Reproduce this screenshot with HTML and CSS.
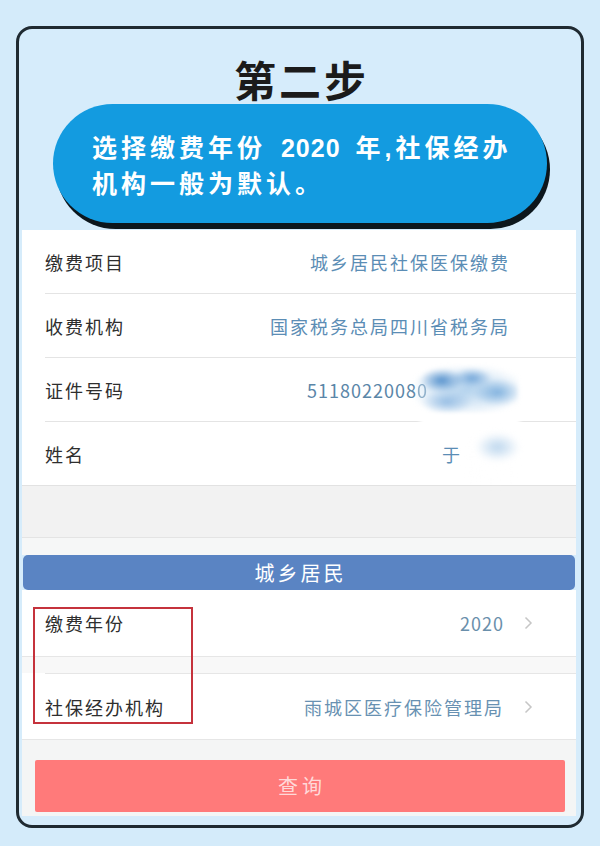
FILE: index.html
```html
<!DOCTYPE html>
<html lang="zh-CN">
<head>
<meta charset="utf-8">
<title>第二步</title>
<link rel="stylesheet" href="styles.css">
</head>
<body>
<div class="frame">
  <h1 class="title">第二步</h1>
  <div class="pill">
    <p class="pill-text">选择缴费年份 <span class="yr">2020</span> 年,社保经办<br>机构一般为默认。</p>
  </div>
  <div class="panel">
    <div class="info">
      <div class="row"><span class="label">缴费项目</span><span class="value">城乡居民社保医保缴费</span></div>
      <div class="row"><span class="label">收费机构</span><span class="value">国家税务总局四川省税务局</span></div>
      <div class="row"><span class="label">证件号码</span><span class="value num">5118022008<span class="cut">0</span><span class="hide-id"></span></span></div>
      <div class="row last"><span class="label">姓名</span><span class="value">于<span class="hide-name"></span></span></div>
    </div>
    <div class="gap-a"></div>
    <div class="gap-b"></div>
    <div class="bar">城乡居民</div>
    <div class="srow">
      <div class="srow-in">
        <span class="label">缴费年份</span>
        <span class="pick"><span class="value num">2020</span><svg class="chev" width="9" height="14" viewBox="0 0 9 14"><polyline points="1.5,1.5 7,7 1.5,12.5" fill="none" stroke="#c6c6c6" stroke-width="1.5"/></svg></span>
      </div>
    </div>
    <div class="sgap"></div>
    <div class="srow second">
      <div class="srow-in indent">
        <span class="label">社保经办机构</span>
        <span class="pick"><span class="value">雨城区医疗保险管理局</span><svg class="chev" width="9" height="14" viewBox="0 0 9 14"><polyline points="1.5,1.5 7,7 1.5,12.5" fill="none" stroke="#c6c6c6" stroke-width="1.5"/></svg></span>
      </div>
    </div>
    <div class="btn-wrap">
      <div class="btn">查询</div>
    </div>
  </div>
</div>
<div class="redact-id"></div>
<div class="redact-line"></div>
<div class="redact-name"></div>
<div class="mark"></div>
</body>
</html>
```

FILE: styles.css
```css
html, body {
  margin: 0;
  padding: 0;
}
body {
  position: relative;
  width: 600px;
  height: 846px;
  overflow: hidden;
  background: #d4ebfa;
  font-family: "Noto Sans CJK SC", "Noto Sans", sans-serif;
  padding-top: 26px;
  box-sizing: border-box;
}
.frame {
  box-sizing: border-box;
  width: 568px;
  height: 802px;
  margin-left: 16px;
  border: 3px solid #1f2a31;
  border-radius: 16px;
  background: #d6ecfb;
}
.title {
  margin: 0;
  padding-top: 28px;
  padding-left: 3px;
  height: 47px;
  line-height: 44px;
  text-align: center;
  font-size: 42px;
  font-weight: 700;
  letter-spacing: 3px;
  color: #1b1b1b;
}
.pill {
  box-sizing: border-box;
  margin-left: 34px;
  width: 494px;
  height: 119px;
  border-radius: 60px;
  background: #139be0;
  box-shadow: 3px 6px 0 #0c161c;
  display: flex;
  align-items: center;
  padding: 4px 0 0 39px;
}
.pill-text {
  margin: 0;
  color: #ffffff;
  font-family: "Liberation Sans", "Noto Sans CJK SC", sans-serif;
  font-size: 25px;
  font-weight: 700;
  line-height: 36px;
  letter-spacing: 4px;
  word-spacing: 4px;
  white-space: nowrap;
}
.yr {
  letter-spacing: 1px;
}
.panel {
  margin: 7px 5px 0 3px;
}
.info {
  background: #ffffff;
}
.row {
  box-sizing: border-box;
  height: 64px;
  margin-left: 23px;
  padding-right: 66px;
  border-bottom: 1px solid #e4e4e4;
  display: flex;
  align-items: center;
  justify-content: space-between;
}
.row.last {
  margin-left: 0;
  padding-left: 23px;
  border-bottom-color: #e2e2e2;
}
.label {
  font-size: 18px;
  letter-spacing: 2px;
  color: #2e2e2e;
}
.value {
  font-size: 18px;
  letter-spacing: 2px;
  color: #5b8db5;
}
.value.num {
  letter-spacing: 1px;
  color: #5a86a8;
}
.cut {
  opacity: 0.7;
}
.hide-id {
  display: inline-block;
  width: 82px;
}
.hide-name {
  display: inline-block;
  width: 48px;
}
.gap-a {
  height: 51px;
  background: #f2f2f2;
  border-bottom: 1px solid #e4e4e4;
}
.gap-b {
  height: 17px;
  background: #f6f7f7;
}
.bar {
  margin: 0 1px;
  height: 35px;
  line-height: 35px;
  border-radius: 5px;
  background: #5a84c3;
  color: #ffffff;
  text-align: center;
  font-size: 20px;
  letter-spacing: 3px;
  padding-left: 3px;
}
.srow {
  background: #ffffff;
  border-bottom: 1px solid #e6e6e6;
}
.srow-in {
  box-sizing: border-box;
  height: 66px;
  padding: 0 43px 0 23px;
  display: flex;
  align-items: center;
  justify-content: space-between;
}
.srow-in.indent {
  margin-left: 23px;
  padding-left: 0;
  height: 66px;
  border-top: 1px solid #e6e6e6;
}
.pick {
  display: flex;
  align-items: center;
}
.pick .value {
  margin-right: 20px;
  color: #6a8fab;
}
.srow.second .value {
  color: #6891b2;
}
.chev {
  display: block;
}
.sgap {
  height: 16px;
  background: #f8f8f8;
}
.btn-wrap {
  background: #f4f5f5;
  padding: 20px 11px 4px 13px;
}
.btn {
  height: 52px;
  line-height: 52px;
  border-radius: 2px;
  background: #ff7a7a;
  color: #ffd9d9;
  text-align: center;
  font-size: 20px;
  letter-spacing: 4px;
  padding-left: 4px;
}
.redact-id {
  position: absolute;
  left: 416px;
  top: 366px;
  width: 102px;
  height: 48px;
  background:
    radial-gradient(ellipse 22px 12px at 25% 30%, rgba(70, 135, 200, 0.9), rgba(70, 135, 200, 0) 100%),
    radial-gradient(ellipse 20px 10px at 55% 25%, rgba(90, 150, 210, 0.8), rgba(90, 150, 210, 0) 100%),
    radial-gradient(ellipse 24px 14px at 80% 55%, rgba(100, 160, 215, 0.75), rgba(100, 160, 215, 0) 100%),
    radial-gradient(ellipse 26px 12px at 30% 75%, rgba(120, 170, 220, 0.7), rgba(120, 170, 220, 0) 100%),
    radial-gradient(ellipse 60px 26px at 50% 50%, rgba(170, 205, 235, 0.9), rgba(170, 205, 235, 0) 100%);
  filter: blur(2px);
}
.redact-line {
  position: absolute;
  left: 420px;
  top: 414px;
  width: 100px;
  height: 14px;
  background: #ffffff;
  filter: blur(2px);
}
.redact-name {
  position: absolute;
  left: 458px;
  top: 424px;
  width: 66px;
  height: 66px;
  background:
    radial-gradient(ellipse 22px 14px at 60% 35%, rgba(140, 185, 225, 0.6), rgba(140, 185, 225, 0) 100%),
    radial-gradient(ellipse 30px 30px at 50% 50%, rgba(255, 255, 255, 0.95), rgba(255, 255, 255, 0) 100%);
  filter: blur(3px);
}
.mark {
  position: absolute;
  left: 33px;
  top: 607px;
  width: 156px;
  height: 113px;
  border: 2px solid #c5323c;
}
```
